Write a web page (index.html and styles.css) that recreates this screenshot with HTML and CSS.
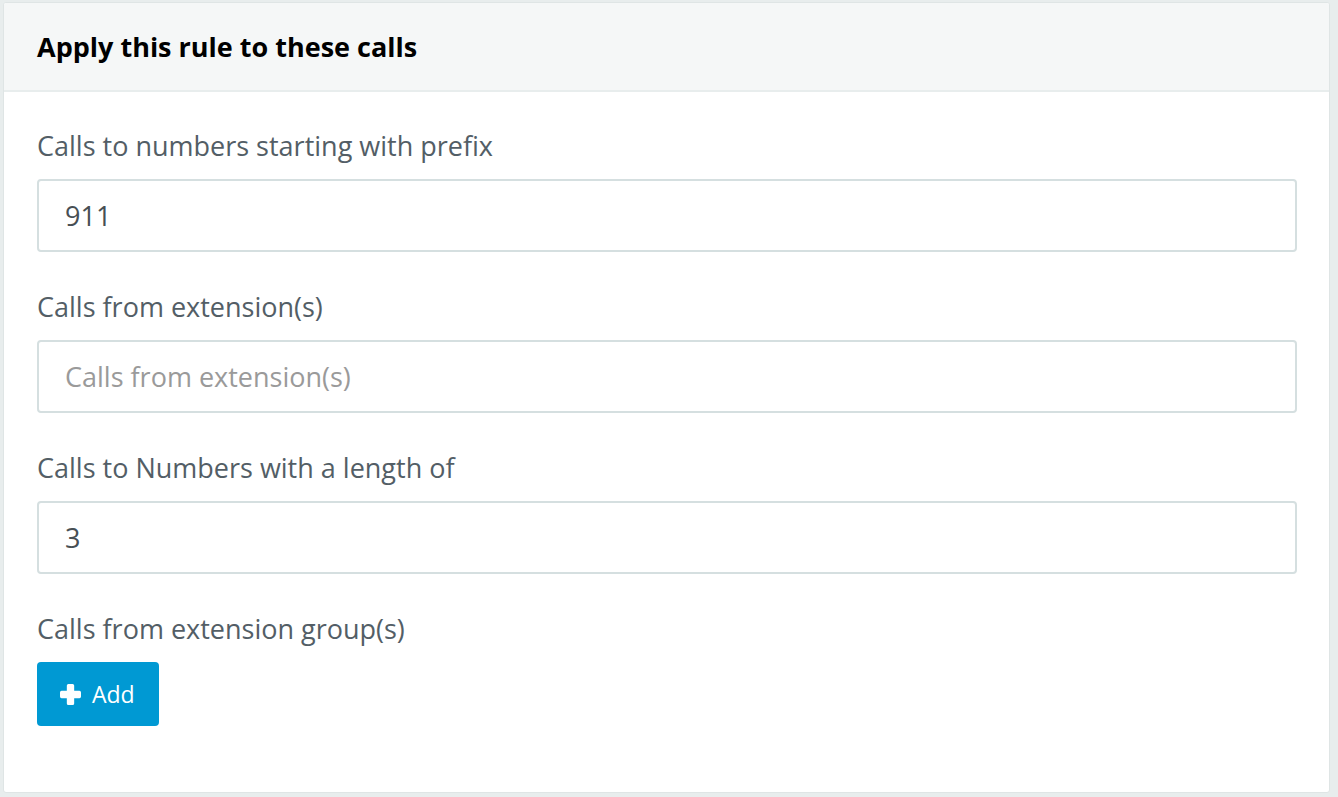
FILE: index.html
```html
<!DOCTYPE html>
<html lang="en">
<head>
<meta charset="utf-8">
<title>Apply this rule</title>
<link rel="stylesheet" href="styles.css">
</head>
<body>
<section class="card">
  <header class="card-header">
    <h2 class="card-title">Apply this rule to these calls</h2>
  </header>
  <div class="card-body">
    <div class="field">
      <label class="field-label" for="prefix">Calls to numbers starting with prefix</label>
      <input class="field-input" id="prefix" type="text" value="911">
    </div>
    <div class="field">
      <label class="field-label" for="ext">Calls from extension(s)</label>
      <input class="field-input" id="ext" type="text" placeholder="Calls from extension(s)">
    </div>
    <div class="field">
      <label class="field-label" for="len">Calls to Numbers with a length of</label>
      <input class="field-input" id="len" type="text" value="3">
    </div>
    <div class="field">
      <span class="field-label">Calls from extension group(s)</span>
      <div class="actions">
        <button class="btn-add" type="button">
          <svg class="plus" viewBox="0 0 20 20" width="21" height="21" aria-hidden="true">
            <path d="M6.5 1.5 Q6.5 0 8 0 H12 Q13.5 0 13.5 1.5 V6.5 H18.5 Q20 6.5 20 8 V12 Q20 13.5 18.5 13.5 H13.5 V18.5 Q13.5 20 12 20 H8 Q6.5 20 6.5 18.5 V13.5 H1.5 Q0 13.5 0 12 V8 Q0 6.5 1.5 6.5 H6.5 Z" fill="#fff"/>
          </svg>
          <span>Add</span>
        </button>
      </div>
    </div>
  </div>
</section>
</body>
</html>
```

FILE: styles.css
```css
html, body {
  margin: 0;
  padding: 0;
}
body {
  background: #e8eded;
  font-family: "Open Sans", Lato, "Liberation Sans", sans-serif;
  padding: 2px 8px 4px 3px;
  height: 797px;
  box-sizing: border-box;
}
.card {
  background: #fff;
  border: 1px solid #dfe5e5;
  border-radius: 3px;
  box-sizing: border-box;
  height: 791px;
  overflow: hidden;
}
.card-header {
  background: #f5f7f7;
  border-bottom: 2px solid #e8eded;
  height: 87px;
  display: flex;
  align-items: center;
  padding: 0 33px;
}
.card-title {
  margin: 0;
  font-size: 27px;
  font-weight: 700;
  color: #000;
}
.card-body {
  padding: 36px 32px 0 33px;
  display: flex;
  flex-direction: column;
  gap: 37px;
}
.field {
  display: flex;
  flex-direction: column;
}
.field-label {
  font-size: 27px;
  line-height: 36px;
  color: #535e66;
  margin-bottom: 15px;
}
.field-input {
  height: 73px;
  box-sizing: border-box;
  border: 2px solid #d5dfe0;
  border-radius: 4px;
  padding: 0 26px;
  font-family: inherit;
  font-size: 27px;
  color: #474f54;
  background: #fff;
  width: 100%;
  outline: none;
}
.field-input::placeholder {
  color: #9a9a9a;
}
.actions {
  display: flex;
}
.btn-add {
  display: flex;
  align-items: center;
  gap: 11px;
  height: 64px;
  padding: 0 24px 0 23px;
  border: none;
  border-radius: 4px;
  background: #0099d3;
  color: #fff;
  font-family: inherit;
  font-size: 23px;
  cursor: pointer;
}
.plus {
  display: block;
}
```
